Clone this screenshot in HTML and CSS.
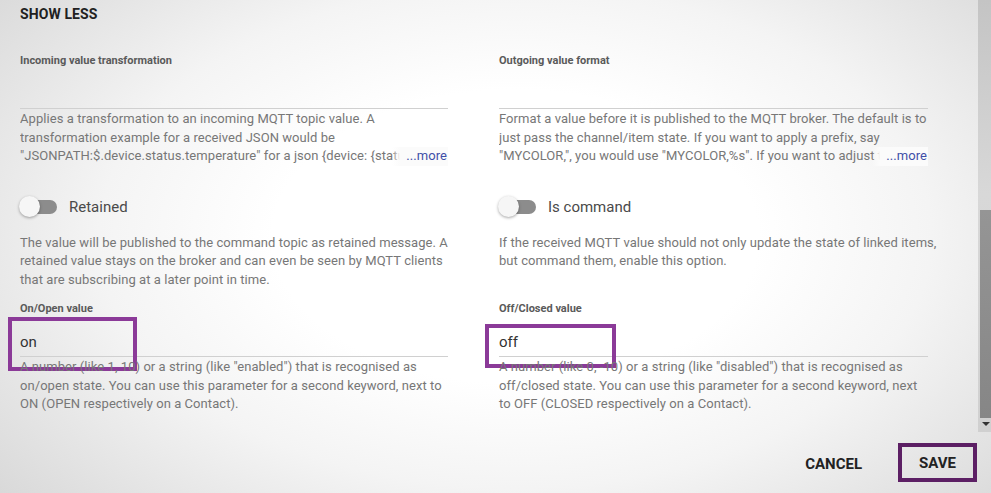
FILE: index.html
```html
<!DOCTYPE html>
<html>
<head>
<meta charset="utf-8">
<link rel="stylesheet" href="styles.css">
</head>
<body>
<div class="dialog">
  <div class="body">
    <div class="content">
      <div class="show-less">SHOW LESS</div>
      <div class="grid">
        <div class="cell">
          <div class="label">Incoming value transformation</div>
          <div class="input"></div>
          <div class="desc clamp">Applies a transformation to an incoming MQTT topic value. A transformation example for a received JSON would be "JSONPATH:$.device.status.temperature" for a json {device: {status: {temperature: 23.2}}}.<span class="more">...more</span></div>
        </div>
        <div class="cell">
          <div class="label">Outgoing value format</div>
          <div class="input"></div>
          <div class="desc clamp">Format a value before it is published to the MQTT broker. The default is to just pass the channel/item state. If you want to apply a prefix, say "MYCOLOR,", you would use "MYCOLOR,%s". If you want to adjust the precision of a number to for example 4 digits, you would use "%.4f".<span class="more">...more</span></div>
        </div>
        <div class="cell row2">
          <div class="toggle-row"><span class="toggle"><span class="knob"></span></span><span class="toggle-label">Retained</span></div>
          <div class="desc gap">The value will be published to the command topic as retained message. A retained value stays on the broker and can even be seen by MQTT clients that are subscribing at a later point in time.</div>
        </div>
        <div class="cell row2">
          <div class="toggle-row"><span class="toggle"><span class="knob"></span></span><span class="toggle-label">Is command</span></div>
          <div class="desc gap">If the received MQTT value should not only update the state of linked items, but command them, enable this option.</div>
        </div>
        <div class="cell row3">
          <div class="label">On/Open value</div>
          <div class="input value">on<span class="mark mark-left"></span></div>
          <div class="desc">A number (like 1, 10) or a string (like "enabled") that is recognised as on/open state. You can use this parameter for a second keyword, next to ON (OPEN respectively on a Contact).</div>
        </div>
        <div class="cell row3">
          <div class="label">Off/Closed value</div>
          <div class="input value">off<span class="mark mark-right"></span></div>
          <div class="desc narrow">A number (like 0, -10) or a string (like "disabled") that is recognised as off/closed state. You can use this parameter for a second keyword, next to OFF (CLOSED respectively on a Contact).</div>
        </div>
      </div>
    </div>
    <div class="scrollbar">
      <div class="thumb"></div>
      <div class="arrow"></div>
    </div>
  </div>
  <div class="actions">
    <button class="btn cancel">CANCEL</button>
    <button class="btn save">SAVE</button>
  </div>
</div>
</body>
</html>
```
FILE: styles.css
```css
html, body {
  margin: 0;
  padding: 0;
  width: 991px;
  height: 493px;
  overflow: hidden;
}
body {
  font-family: Roboto, "Liberation Sans", sans-serif;
  background: radial-gradient(ellipse 70% 85% at 52% 48%, #ffffff 35%, #f4f4f4 60%, #d6d6d6 100%);
}
.dialog {
  display: flex;
  flex-direction: column;
  height: 493px;
}
.body {
  display: flex;
  height: 432px;
}
.content {
  width: 978px;
  padding-left: 20px;
  box-sizing: border-box;
}
.show-less {
  margin-top: 4px;
  height: 20px;
  line-height: 20px;
  font-size: 14px;
  font-weight: bold;
  color: #212121;
  letter-spacing: 0.1px;
}
.grid {
  display: grid;
  grid-template-columns: 428px 429px;
  column-gap: 51px;
}
.cell {
  display: flex;
  flex-direction: column;
}
.label {
  margin-top: 30px;
  height: 14px;
  line-height: 14px;
  font-size: 11px;
  font-weight: bold;
  color: #5a5a5a;
}
.row3 .label {
  margin-top: 13px;
}
.input {
  position: relative;
  height: 40px;
  border-bottom: 1px solid #d0d0d0;
  box-sizing: content-box;
}
.input.value {
  box-sizing: border-box;
  height: 41px;
  padding: 16px 0 0 0;
  line-height: 20px;
  font-size: 15px;
  color: #333;
}
.desc {
  position: relative;
  margin-top: 1px;
  margin-right: -12px;
  font-size: 13px;
  font-weight: 400;
  letter-spacing: 0.06px;
  line-height: 18.5px;
  color: #777;
}
.desc.narrow {
  margin-right: 0;
  max-width: 419px;
}
.desc.clamp {
  height: 55.5px;
  overflow: hidden;
  margin-right: 0;
}
.desc.gap {
  margin-top: 15px;
}
.more {
  position: absolute;
  right: 0;
  bottom: 0;
  height: 18.5px;
  padding-left: 14px;
  padding-right: 1px;
  color: #3f4fa8;
  background: linear-gradient(to right, rgba(250,250,250,0), #fbfbfb 8px);
}
.row2 {
  margin-top: 29px;
}
.toggle-row {
  display: flex;
  align-items: center;
  height: 24px;
}
.toggle {
  position: relative;
  display: inline-block;
  width: 37px;
  height: 14px;
  border-radius: 7px;
  background: #8c8c8c;
  margin-right: 12px;
}
.knob {
  position: absolute;
  left: -1px;
  top: -4px;
  width: 21px;
  height: 21px;
  border-radius: 50%;
  background: #f6f6f6;
  box-shadow: 0 1px 3px rgba(0,0,0,0.35);
}
.toggle-label {
  font-size: 15px;
  font-weight: 400;
  color: #4a4a4a;
}
.mark {
  position: absolute;
  border: 4px solid #8b3a98;
  box-sizing: border-box;
}
.mark-left {
  left: -12px;
  top: 1px;
  width: 129px;
  height: 54px;
}
.mark-right {
  left: -14px;
  top: 8px;
  width: 131px;
  height: 44px;
}
.scrollbar {
  position: relative;
  width: 13px;
  height: 432px;
  background: linear-gradient(to bottom, #c4c4c4, #d8d8d8 45%, #d0d0d0);
}
.thumb {
  position: absolute;
  left: 2px;
  right: 0;
  top: 210px;
  height: 208px;
  background: linear-gradient(to bottom, #959595, #868686);
}
.arrow {
  position: absolute;
  left: 4px;
  top: 422px;
  width: 0;
  height: 0;
  border-left: 4px solid transparent;
  border-right: 4px solid transparent;
  border-top: 4px solid #333;
}
.actions {
  display: flex;
  justify-content: flex-end;
  align-items: center;
  padding-right: 14px;
  height: 61px;
}
.btn {
  font-family: Roboto, "Liberation Sans", sans-serif;
  font-size: 15px;
  font-weight: bold;
  color: #222;
  background: transparent;
  border: none;
  padding: 0;
  cursor: pointer;
}
.cancel {
  margin-right: 36px;
  margin-top: 2px;
}
.save {
  width: 79px;
  height: 39px;
  margin-top: 0;
  border: 4px solid #5c1f64;
  box-sizing: border-box;
}
```
